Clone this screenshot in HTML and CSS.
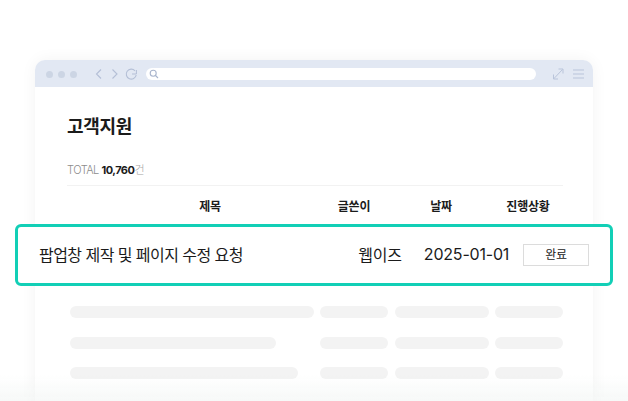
FILE: index.html
```html
<!DOCTYPE html>
<html lang="ko">
<head>
<meta charset="utf-8">
<title>고객지원</title>
<link rel="stylesheet" href="styles.css">
</head>
<body>
<div class="window">
  <div class="bar">
    <div class="dots"><i></i><i></i><i></i></div>
    <svg class="nav" width="42" height="14" viewBox="0 0 42 14" fill="none" stroke="#b4bfd6" stroke-width="1.1">
      <path d="M6 2.5 1.5 7 6 11.5"/>
      <path d="M17.5 2.5 22 7 17.5 11.5"/>
      <path d="M40 3.8A5 5 0 1 0 41.2 8"/>
      <path d="M37 7h4.4V3" stroke-width="1"/>
    </svg>
    <div class="url">
      <svg width="10" height="10" viewBox="0 0 10 10" fill="none" stroke="#a9b5cd" stroke-width="1.1"><circle cx="4.2" cy="4.2" r="3"/><path d="M6.5 6.5 9 9"/></svg>
    </div>
    <svg class="tools" width="31" height="12" viewBox="0 0 31 12" fill="none" stroke="#b9c4da" stroke-width="1">
      <path d="M.5 11 9.5 1.5M5.5 1H10V5.5M.5 6.5V11H5"/>
      <path d="M20 2h11M20 6h11M20 10h11"/>
    </svg>
  </div>
  <div class="content">
    <h1 class="title">고객지원</h1>
    <p class="total">TOTAL <b>10,760</b><span>건</span></p>
    <div class="row head">
      <div>제목</div><div>글쓴이</div><div>날짜</div><div>진행상황</div>
    </div>
    <div class="row highlight">
      <div class="subject">팝업창 제작 및 페이지 수정 요청</div>
      <div>웹이즈</div>
      <div>2025-01-01</div>
      <div class="status-cell"><span class="status">완료</span></div>
    </div>
    <div class="skeleton">
      <i class="w1"></i><i></i><i></i><i></i>
      <i class="w2"></i><i></i><i></i><i></i>
      <i class="w3"></i><i></i><i></i><i></i>
    </div>
  </div>
</div>
<div class="fade"></div>
</body>
</html>
```
FILE: styles.css
```css
* { box-sizing: border-box; }
html, body { margin: 0; height: 401px; overflow: hidden; background: #fff; }
body {
  padding: 60px 35px 0;
  font-family: Inter, "Noto Sans CJK KR", sans-serif;
  color: #1b1b1b;
}
.window {
  height: 360px;
  border-radius: 10px 10px 0 0;
  background: #fff;
  box-shadow: 0 0 16px rgba(0, 0, 0, .05);
}
.bar {
  height: 27px;
  background: #e2e8f3;
  border-radius: 10px 10px 0 0;
  display: flex;
  align-items: center;
  padding: 1px 9px 0 11px;
}
.dots { display: flex; gap: 5px; }
.dots i { width: 7px; height: 7px; border-radius: 50%; background: #ccd5e4; }
.nav { margin-left: 18px; }
.url {
  margin-left: 9px;
  flex: 1;
  height: 12px;
  border-radius: 6px;
  background: #fff;
  display: flex;
  align-items: center;
  padding-left: 3px;
}
.tools { margin-left: 17px; }
.content { padding: 0 30px 0 32px; }
.title {
  margin: 28px 0 0;
  font-size: 18px;
  line-height: 24px;
  font-weight: 700;
  letter-spacing: -.3px;
}
.total {
  margin: 23px 0 0;
  font-size: 11px;
  font-weight: 300;
  line-height: 16px;
  letter-spacing: -.5px;
  color: #8c8c8c;
  height: 24px;
  border-bottom: 1px solid #f2f2f2;
}
.total b { color: #1b1b1b; font-weight: 700; }
.total span { color: #a5a5a5; }
.row {
  display: grid;
  align-items: center;
  text-align: center;
}
.head {
  height: 38px;
  padding-left: 43px;
  margin-right: -9px;
  font-size: 12px;
  font-weight: 700;
  letter-spacing: -.2px;
  white-space: nowrap;
  grid-template-columns: 200px 88px 86px 88px;
}
.highlight {
  height: 62px;
  margin: 0 -50px 0 -52px;
  padding: 0 21px 2px;
  border: 3px solid #12cfb6;
  border-radius: 6px;
  background: #fff;
  font-size: 16px;
  letter-spacing: -.2px;
  grid-template-columns: 311px 60px 113px 66px;
}
.subject { text-align: left; letter-spacing: -.55px; white-space: nowrap; }
.status {
  display: block;
  height: 22px;
  margin-top: 2px;
  line-height: 20px;
  border: 1px solid #dcdcdc;
  font-size: 12px;
}
.skeleton {
  margin: 20px 0 0 3px;
  display: grid;
  grid-template-columns: 244px 68px 94px 68px;
  justify-content: space-between;
  row-gap: 18.5px;
}
.skeleton i { height: 12px; border-radius: 6px; background: #f3f3f3; }
.skeleton .w2 { width: 206px; }
.skeleton .w3 { width: 228px; }
.fade {
  position: fixed;
  left: 0; right: 0; bottom: 0;
  height: 26px;
  background: linear-gradient(rgba(241, 245, 243, 0), rgba(241, 245, 243, .6));
}
```
